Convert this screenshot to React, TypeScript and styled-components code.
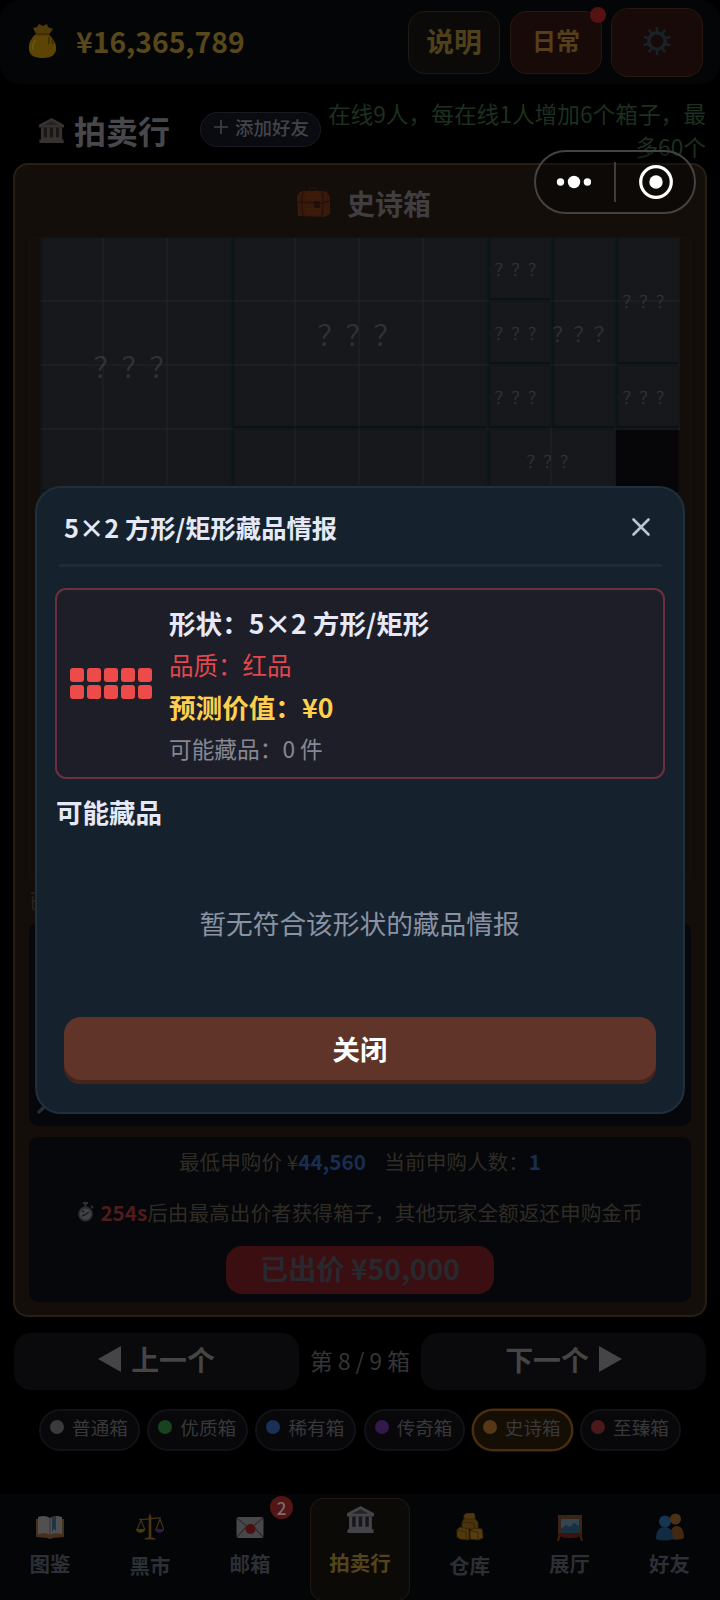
import React from 'react';
import styled, { createGlobalStyle, css } from 'styled-components';

const GlobalStyle = createGlobalStyle`
  * { box-sizing: border-box; }
  body {
    margin: 0;
    background: #000;
    font-family: "Noto Sans CJK SC", "Noto Sans", sans-serif;
    overflow: hidden;
  }
  button { font-family: inherit; border: 0; padding: 0; }
`;

const Page = styled.div`
  width: 720px;
  height: 1600px;
  display: flex;
  flex-direction: column;
  background: #000;
`;

/* ---------- top bar ---------- */
const TopBar = styled.header`
  height: 84px;
  flex: none;
  display: flex;
  align-items: center;
  padding: 0 17px 0 27px;
  border-radius: 20px;
  background: #030507;
`;
const Coins = styled.div`
  flex: 1;
  display: flex;
  align-items: center;
  gap: 18px;
  padding-bottom: 3px;
  color: #58471a;
  font-size: 28.3px;
  font-weight: 700;
  line-height: 40px;
`;
const TopButton = styled.button<{ $tone: 'gold' | 'red'; $tall?: boolean; $size?: number }>`
  position: relative;
  width: 92px;
  height: ${p => (p.$tall ? 69 : 63)}px;
  margin-left: ${p => (p.$tall ? 9 : 10)}px;
  display: flex;
  align-items: center;
  justify-content: center;
  border-radius: 17px;
  border: 1.5px solid ${p => (p.$tone === 'gold' ? '#1f1a12' : '#271810')};
  background: ${p => (p.$tone === 'gold' ? '#0c0a08' : '#170a08')};
  color: ${p => (p.$tone === 'gold' ? '#4e401a' : '#543f1a')};
  font-size: ${p => p.$size ?? 24}px;
  font-weight: 700;
  line-height: 34px;
  padding-bottom: ${p => (p.$tall ? 2 : 4)}px;
`;
const AlertDot = styled.span`
  position: absolute;
  top: -5px;
  right: -5px;
  width: 16px;
  height: 16px;
  border-radius: 50%;
  background: #561212;
`;

/* ---------- page heading ---------- */
const Heading = styled.div`
  height: 79px;
  flex: none;
  display: flex;
  padding: 0 14px 0 38px;
`;
const Title = styled.h1`
  margin: 0;
  width: 162px;
  display: flex;
  align-items: center;
  gap: 9px;
  padding-top: 13px;
  color: #48484c;
  font-size: 32px;
  font-weight: 700;
  line-height: 44px;
  white-space: nowrap;
`;
const AddFriend = styled.button`
  width: 121px;
  height: 35px;
  margin-top: 28px;
  flex: none;
  border: 1.5px solid #1a1b21;
  border-radius: 18px;
  background: #0a0b10;
  color: #424349;
  font-size: 18.5px;
  font-weight: 500;
  line-height: 24px;
  padding: 0 0 5px 2px;
  display: flex;
  align-items: center;
  justify-content: center;
  gap: 7px;
`;
const OnlineNote = styled.p`
  margin: 13px 0 0;
  flex: 1;
  color: #1d301f;
  font-size: 22.7px;
  line-height: 33px;
  text-align: right;
  white-space: nowrap;
`;

/* ---------- auction panel ---------- */
const Panel = styled.section`
  height: 1154px;
  flex: none;
  margin: 0 13px;
  padding: 0 14px;
  display: flex;
  flex-direction: column;
  border: 2px solid #281e12;
  border-radius: 15px;
  background: #130e0a;
`;
const BoxName = styled.h2`
  height: 72px;
  flex: none;
  margin: 0;
  padding: 4px 0 0 6px;
  display: flex;
  align-items: center;
  justify-content: center;
  gap: 16px;
  color: #403e40;
  font-size: 28px;
  font-weight: 700;
  line-height: 40px;
`;
const BoardFrame = styled.div`
  width: 662px;
  height: 642px;
  flex: none;
  display: flex;
  justify-content: center;
  border: 1px solid #1a110c;
  border-radius: 4px;
`;
const Board = styled.div`
  position: relative;
  width: 640px;
  height: 640px;
  display: grid;
  grid-template-columns: repeat(10, 64px);
  grid-template-rows: repeat(10, 64px);
  background: #060608;
  &::after {
    content: '';
    position: absolute;
    inset: 0;
    background-image:
      linear-gradient(to right, transparent 62px, rgba(255, 255, 255, 0.022) 62px),
      linear-gradient(to bottom, transparent 62px, rgba(255, 255, 255, 0.022) 62px);
    background-size: 64px 64px;
  }
`;
const Piece = styled.div<{ $c: number; $r: number; $w: number; $h: number; $size: number }>`
  grid-column: ${p => p.$c + 1} / span ${p => p.$w};
  grid-row: ${p => p.$r + 1} / span ${p => p.$h};
  display: flex;
  align-items: center;
  justify-content: center;
  padding: 0 1px 1px 0;
  background: #16181b;
  box-shadow: inset -2px -4px 1px #0c1115, inset 2px 0 1px #0e151a;
  color: #2f3135;
  font-size: ${p => p.$size}px;
  line-height: 1;
  white-space: nowrap;
`;
const BoughtNote = styled.div`
  height: 44px;
  flex: none;
  padding-top: 8px;
  color: #29231f;
  font-size: 20px;
  line-height: 28px;
`;
const DarkBox = styled.div<{ $h: number }>`
  height: ${p => p.$h}px;
  flex: none;
  border-radius: 9px;
  background: #05070a;
`;
const ToolBox = styled(DarkBox)`
  margin-bottom: 11px;
  display: flex;
  align-items: flex-end;
  padding: 0 0 12px 8px;
`;
const BidBox = styled(DarkBox)`
  display: flex;
  flex-direction: column;
  align-items: center;
`;
const BidLine = styled.div<{ $top: number }>`
  margin-top: ${p => p.$top}px;
  height: 30px;
  display: flex;
  align-items: center;
  color: #302c25;
  font-size: 20.65px;
  line-height: 30px;
  white-space: pre;
  svg { margin-right: 6px; }
`;
const Figure = styled.b<{ $tone: string }>`
  color: ${p => p.$tone};
  font-weight: 700;
`;
const BidButton = styled.button`
  width: 268px;
  height: 48px;
  margin-top: 19px;
  border-radius: 16px;
  background: #3b0f12;
  color: #26292e;
  font-size: 28.2px;
  font-weight: 700;
  line-height: 42px;
  padding-bottom: 4px;
`;

/* ---------- pager and filters ---------- */
const Pager = styled.div`
  margin: 16px 14px 0;
  height: 57px;
  flex: none;
  display: flex;
  justify-content: space-between;
  align-items: center;
  color: #353538;
  font-size: 22.7px;
`;
const PageLabel = styled.span`
  padding-bottom: 2px;
`;
const PageButton = styled.button`
  width: 285px;
  height: 57px;
  display: flex;
  align-items: center;
  justify-content: center;
  gap: 10px;
  padding-bottom: 5px;
  border-radius: 17px;
  background: #0a0a0c;
  color: #454548;
  font-size: 27.9px;
  font-weight: 700;
`;
const Filters = styled.div`
  margin: 19px 39px 0;
  height: 42px;
  flex: none;
  display: flex;
  justify-content: space-between;
`;
const Chip = styled.div<{ $active?: boolean }>`
  width: 101px;
  display: flex;
  align-items: center;
  justify-content: center;
  gap: 8px;
  padding: 0 1px 6px 0;
  border: 2px solid #111216;
  border-radius: 22px;
  background: #08080b;
  color: #38383b;
  font-size: 18.6px;
  line-height: 26px;
  white-space: nowrap;
  ${p => p.$active && css`
    border: 2px solid #4a2d0f;
    background: #140e05;
    box-shadow: 0 0 0 0.5px #4a2d0f;
  `}
`;
const Dot = styled.span<{ $tone: string }>`
  width: 14px;
  height: 14px;
  flex: none;
  border-radius: 50%;
  background: ${p => p.$tone};
`;

/* ---------- bottom navigation ---------- */
const Nav = styled.nav`
  height: 106px;
  flex: none;
  margin-top: auto;
  display: flex;
  background: #030507;
`;
const NavItem = styled.div<{ $active?: boolean; $low?: boolean }>`
  position: relative;
  width: 100px;
  display: flex;
  flex-direction: column;
  align-items: center;
  padding-top: 19px;
  color: #2c2f34;
  font-size: 20.5px;
  font-weight: 700;
  line-height: 30px;
  svg { margin-bottom: ${p => (p.$low ? 9 : 7)}px; }
  ${p => p.$active && css`
    height: 103px;
    margin: 4px 9.5px 0 10px;
    padding-top: 6px;
    border: 1.5px solid #211910;
    border-radius: 13px;
    background: #0c0a06;
    color: #54441b;
    svg { margin-bottom: 13px; }
  `}
`;
const Badge = styled.span`
  position: absolute;
  left: 70px;
  top: 2px;
  width: 23px;
  height: 23px;
  border-radius: 50%;
  background: #541515;
  color: #77706f;
  font-size: 17px;
  font-weight: 500;
  line-height: 23px;
  text-align: center;
`;

/* ---------- mini-program capsule ---------- */
const Capsule = styled.div`
  position: absolute;
  left: 534px;
  top: 150px;
  width: 162px;
  height: 64px;
  border: 2px solid #454341;
  border-radius: 32px;
  background: rgba(0, 0, 0, 0.3);
`;

/* ---------- dialog ---------- */
const Dialog = styled.div`
  position: absolute;
  left: 35px;
  top: 486px;
  width: 650px;
  height: 628px;
  padding: 0 18px;
  display: flex;
  flex-direction: column;
  border: 2px solid #1f2f3c;
  border-radius: 26px;
  background: #15222e;
  color: #e6e9f5;
`;
const DialogHead = styled.div`
  height: 79px;
  flex: none;
  margin: 0 3px 0 4px;
  padding: 1px 12px 0 5px;
  display: flex;
  align-items: center;
  justify-content: space-between;
  border-bottom: 3px solid #1f2b39;
  font-size: 25.3px;
  font-weight: 700;
  line-height: 36px;
`;
const InfoCard = styled.div`
  height: 191px;
  flex: none;
  margin-top: 21px;
  padding: 0 13px;
  display: flex;
  align-items: center;
  gap: 17px;
  border: 2px solid #6d303f;
  border-radius: 11px;
  background: #1d1e28;
`;
const Tiles = styled.div`
  display: grid;
  grid-template-columns: repeat(5, 14px);
  grid-auto-rows: 14px;
  gap: 3px;
`;
const Tile = styled.span`
  border-radius: 3px;
  background: #ec4b4a;
`;
const Facts = styled.div`
  display: flex;
  flex-direction: column;
  padding-top: 4px;
`;
const Fact = styled.div<{ $tone: string; $size: number; $strong?: boolean }>`
  height: 42px;
  color: ${p => p.$tone};
  font-size: ${p => p.$size}px;
  font-weight: ${p => (p.$strong ? 700 : 400)};
  line-height: 42px;
  white-space: nowrap;
`;
const SubTitle = styled.h3`
  margin: 14px 0 0 1px;
  font-size: 26.5px;
  font-weight: 700;
  line-height: 38px;
`;
const Empty = styled.div`
  flex: 1;
  display: flex;
  align-items: center;
  justify-content: center;
  padding: 0 1px 2px 0;
  color: #8b92a3;
  font-size: 26.7px;
  line-height: 38px;
`;
const CloseButton = styled.button`
  width: 592px;
  height: 67px;
  flex: none;
  margin: 0 auto 28px;
  border-radius: 17px;
  background: #603428;
  box-shadow: inset 0 -4px 0 #46231b;
  color: #fff;
  font-size: 27.4px;
  font-weight: 700;
  line-height: 40px;
  padding-bottom: 5px;
`;

/* ---------- drawings ---------- */
const MoneyBag = () => (
  <svg width="31" height="36" viewBox="0 0 31 36">
    <path d="M9 11C4 15 1 21 2 27c1 6 6 8 14 8s12-3 13-8c1-6-3-12-8-16z" fill="#5c4405" />
    <path d="M6 5l4-1 2-3 4 2 4-2 1 3 5 2-5 7H10z" fill="#503b08" />
    <path d="M9 11h13M22 14v7M25 16l1 5" stroke="#3b2b06" strokeWidth="1.600" fill="none" />
    <path d="M8 17c-2 4-3 6-2 10" stroke="#6b5414" strokeWidth="1.600" fill="none" />
  </svg>
);
const Gear = () => (
  <svg width="30" height="30" viewBox="-15 -15 30 30" fill="none" stroke="#1a2127">
    <circle r="8.200" strokeWidth="3.600" />
    {Array.from({ length: 10 }, (_, i) => (
      <path key={i} d="M0-9V-14" strokeWidth="2.600" transform={`rotate(${i * 36})`} />
    ))}
  </svg>
);
const Temple = ({ size, bright = false }: { size: number; bright?: boolean }) => {
  const c = bright ? '#444448' : '#38322e';
  const shade = bright ? '#17171b' : '#1a1715';
  return (
    <svg width={size} height={size} viewBox="0 0 28 28">
      <path d="M4 10h20v12H4z" fill={shade} />
      <path d="M1 8L14 1l13 7v3H1z" fill={c} />
      <path d="M6 8.500L14 4l8 4.500z" fill="#242325" />
      <path d="M4.500 11v11M10.800 11v11M17.200 11v11M23.500 11v11" stroke={c} strokeWidth="3" />
      <path d="M3 21h22v2.400h1.600V27H1.400v-3.600H3z" fill={c} />
    </svg>
  );
};
const Chest = () => (
  <svg width="36" height="32" viewBox="0 0 36 32">
    <path d="M14 4c0-4 8-4 8 0" fill="none" stroke="#25140b" strokeWidth="1.600" />
    <path d="M2 12c0-6 3-8 7-8h19c4 0 7 3 7 9v14l-6 3L3 29z" fill="#38190a" />
    <path d="M2 15l24 1 9-2M8 5c-2 5-1 15 0 24M27 5c2 7 1 17 0 25" stroke="#27120a" strokeWidth="1.300" fill="none" />
    <path d="M11 7h13M11 11h13M11 22h13M11 26h13" stroke="#42200b" strokeWidth="1.200" />
    <rect x="19" y="14" width="6" height="7" rx="1" fill="#210e09" />
  </svg>
);
const Stopwatch = () => (
  <svg width="17" height="20" viewBox="0 0 17 20">
    <path d="M6 1h5M8.500 2v3M14 4l2 2" stroke="#303133" strokeWidth="1.800" />
    <circle cx="8.500" cy="12" r="6.500" fill="#424345" stroke="#2c2d2f" strokeWidth="1.800" />
    <path d="M8.500 12.500L12 10M8.500 12.500L5 14M5 9l2 1" stroke="#191a1b" strokeWidth="1.400" />
  </svg>
);
const Book = () => (
  <svg width="28" height="28" viewBox="0 0 28 28">
    <path d="M0 6h28v18l-11 1-3 1-3-1-11-1z" fill="#44301b" />
    <path d="M2 4c5-2 9-1 12 1 3-2 7-3 12-1v17c-5-1-9-1-12 1-3-2-7-2-12-1z" fill="#52504e" />
    <path d="M14 5v17" stroke="#3a3937" strokeWidth="1.200" />
    <path d="M16 4l4-1v15l-2-2-2 3z" fill="#1b3649" />
  </svg>
);
const Scales = () => (
  <svg width="28" height="28" viewBox="0 0 28 28" fill="none" stroke="#4a3515" strokeWidth="1.500">
    <path d="M14 1v24M3 6c5 2 17-2 22-1M5 7L1 17M5 7l4 10M24 6l-4 11M24 6l4 11" strokeWidth="1.100" />
    <path d="M13 3h2v22h-2z" fill="#4a3515" strokeWidth=".6" />
    <path d="M0 16h9c0 5-9 5-9 0z" fill="#4c3908" stroke="none" />
    <path d="M19 16h9c0 5-9 5-9 0z" fill="#321948" stroke="none" />
    <path d="M8 26.500c2-3 10-3 12 0z" fill="#4a3515" stroke="none" />
  </svg>
);
const Mail = () => (
  <svg width="28" height="28" viewBox="0 0 28 28">
    <rect x=".5" y="4" width="27" height="21" rx="2" fill="#48474a" />
    <path d="M1 5l13 11L27 5M1 24l9-10M27 24l-9-10" fill="none" stroke="#302e30" strokeWidth="1.200" />
    <circle cx="14.500" cy="16" r="5" fill="#481013" />
  </svg>
);
const Boxes = () => (
  <svg width="28" height="28" viewBox="0 0 28 28" stroke="#35240a" strokeWidth=".9">
    <path d="M8 2l3-2h7l1 3v5H8z" fill="#503912" />
    <path d="M6 9l2-3h11l3 3v7H6z" fill="#4a340c" />
    <path d="M1 17l3-3 9 2v11l-9-1-3-2z" fill="#4f390d" />
    <path d="M14 18l4-3 8 1 1 9-5 2-8-1z" fill="#553d10" />
    <path d="M1 17l9 2v8M14 18l8 1v8M6 9l12 1v6" fill="none" />
  </svg>
);
const Picture = () => (
  <svg width="28" height="28" viewBox="0 0 28 28">
    <path d="M4 20l-2 8M24 20l2 8" stroke="#3e200c" strokeWidth="2" />
    <rect x="2" y="2" width="24" height="20" fill="#3a2417" />
    <rect x="5" y="6" width="18" height="14" fill="#35444f" />
    <path d="M5 16l5-4 4 2 4-4 5 3v7H5z" fill="#173042" />
    <path d="M3 20h22v3c-6 3-16 3-22 0z" fill="#3c120b" />
  </svg>
);
const People = () => (
  <svg width="28" height="28" viewBox="0 0 28 28">
    <circle cx="19.500" cy="6" r="5.500" fill="#4b3217" />
    <path d="M14 26c0-9 2-13 7-13s7 5 7 12c-3 2-8 2-14 1z" fill="#42280e" />
    <circle cx="9" cy="8.500" r="6" fill="#153550" />
    <path d="M0 26c0-8 3-12 9-12 5 0 8 4 8 12-5 2-12 2-17 0z" fill="#102b42" />
  </svg>
);
const Triangle = ({ flip = false }: { flip?: boolean }) => (
  <svg width="23" height="26" viewBox="0 0 23 26">
    <path d={flip ? 'M0 0v26L23 13z' : 'M23 0v26L0 13z'} fill="#454548" />
  </svg>
);

const pieces: [number, number, number, number, number, string][] = [
  [0, 0, 3, 4, 28, '？？？'],
  [3, 0, 4, 3, 28, '？？？'],
  [7, 0, 1, 1, 16.7, '？？？'],
  [7, 1, 1, 1, 16.7, '？？？'],
  [7, 2, 1, 1, 16.7, '？？？'],
  [8, 0, 1, 3, 20.7, '？？？'],
  [9, 0, 1, 2, 16.7, '？？？'],
  [9, 2, 1, 1, 16.7, '？？？'],
  [3, 3, 4, 4, 28, ''],
  [7, 3, 2, 1, 16.7, '？？？'],
  [0, 4, 3, 3, 28, ''],
];

const chips: [string, string][] = [
  ['普通箱', '#3a3a3c'],
  ['优质箱', '#18431f'],
  ['稀有箱', '#193157'],
  ['传奇箱', '#33194a'],
  ['史诗箱', '#563818'],
  ['至臻箱', '#4a191b'],
];

export default function App() {
  return (
    <>
      <GlobalStyle />
      <Page>
        <TopBar>
          <Coins><MoneyBag />¥16,365,789</Coins>
          <TopButton $tone="gold" $size={27.8}>说明</TopButton>
          <TopButton $tone="red">日常<AlertDot /></TopButton>
          <TopButton $tone="red" $tall><Gear /></TopButton>
        </TopBar>

        <Heading>
          <Title><Temple size={27} />拍卖行</Title>
          <AddFriend>
            <svg width="14" height="14" viewBox="0 0 14 14" stroke="#424349" strokeWidth="1.600">
              <path d="M0 7h14M7 0v14" />
            </svg>
            添加好友
          </AddFriend>
          <OnlineNote>在线9人，每在线1人增加6个箱子，最<br />多60个</OnlineNote>
        </Heading>

        <Panel>
          <BoxName><Chest />史诗箱</BoxName>
          <BoardFrame>
            <Board>
              {pieces.map(([c, r, w, h, size, label]) => (
                <Piece key={`${c}-${r}`} $c={c} $r={r} $w={w} $h={h} $size={size}>{label}</Piece>
              ))}
            </Board>
          </BoardFrame>
          <BoughtNote>已</BoughtNote>
          <ToolBox $h={203}>
            <svg width="10" height="10" viewBox="0 0 10 10">
              <path d="M2 8l6-6" stroke="#2a2b2e" strokeWidth="3.500" strokeLinecap="round" />
            </svg>
          </ToolBox>
          <BidBox $h={165}>
            <BidLine $top={9}>
              最低申购价 ¥<Figure $tone="#192d50">44,560</Figure>
              <span>{'    '}当前申购人数：</span><Figure $tone="#192d50">1</Figure>
            </BidLine>
            <BidLine $top={21}>
              <Stopwatch /><Figure $tone="#4e1c1d">254s</Figure>后由最高出价者获得箱子，其他玩家全额返还申购金币
            </BidLine>
            <BidButton>已出价 ¥50,000</BidButton>
          </BidBox>
        </Panel>

        <Pager>
          <PageButton><Triangle />上一个</PageButton>
          <PageLabel>第 8 / 9 箱</PageLabel>
          <PageButton>下一个<Triangle flip /></PageButton>
        </Pager>

        <Filters>
          {chips.map(([label, tone]) => (
            <Chip key={label} $active={label === '史诗箱'}><Dot $tone={tone} />{label}</Chip>
          ))}
        </Filters>

        <Nav>
          <NavItem><Book />图鉴</NavItem>
          <NavItem $low><Scales />黑市</NavItem>
          <NavItem><Mail />邮箱<Badge>2</Badge></NavItem>
          <NavItem $active><Temple size={29} bright />拍卖行</NavItem>
          <NavItem $low><Boxes />仓库</NavItem>
          <NavItem><Picture />展厅</NavItem>
          <NavItem><People />好友</NavItem>
        </Nav>
      </Page>

      <Dialog>
        <DialogHead>
          5×2 方形/矩形藏品情报
          <svg width="18" height="18" viewBox="0 0 18 18" stroke="#bcc3d2" strokeWidth="2.600" strokeLinecap="round">
            <path d="M1.500 1.500l15 15M16.500 1.500l-15 15" />
          </svg>
        </DialogHead>
        <InfoCard>
          <Tiles>{Array.from({ length: 10 }, (_, i) => <Tile key={i} />)}</Tiles>
          <Facts>
            <Fact $tone="#e6e9f8" $size={26.6} $strong>形状：5×2 方形/矩形</Fact>
            <Fact $tone="#e2474d" $size={24.5}>品质：红品</Fact>
            <Fact $tone="#ffcf4d" $size={26.6} $strong>预测价值：¥0</Fact>
            <Fact $tone="#858894" $size={22.7}>可能藏品：0 件</Fact>
          </Facts>
        </InfoCard>
        <SubTitle>可能藏品</SubTitle>
        <Empty>暂无符合该形状的藏品情报</Empty>
        <CloseButton>关闭</CloseButton>
      </Dialog>

      <Capsule>
        <svg width="158" height="60" viewBox="0 0 158 60">
          <g fill="#fff">
            <circle cx="24.500" cy="30" r="3.700" />
            <circle cx="38" cy="30" r="6.200" />
            <circle cx="51.400" cy="30" r="3.700" />
            <circle cx="120" cy="30" r="6.700" />
          </g>
          <circle cx="120" cy="30" r="15.300" fill="none" stroke="#fff" strokeWidth="3.200" />
          <path d="M79 10v40" stroke="#454341" strokeWidth="1.800" />
        </svg>
      </Capsule>
    </>
  );
}
